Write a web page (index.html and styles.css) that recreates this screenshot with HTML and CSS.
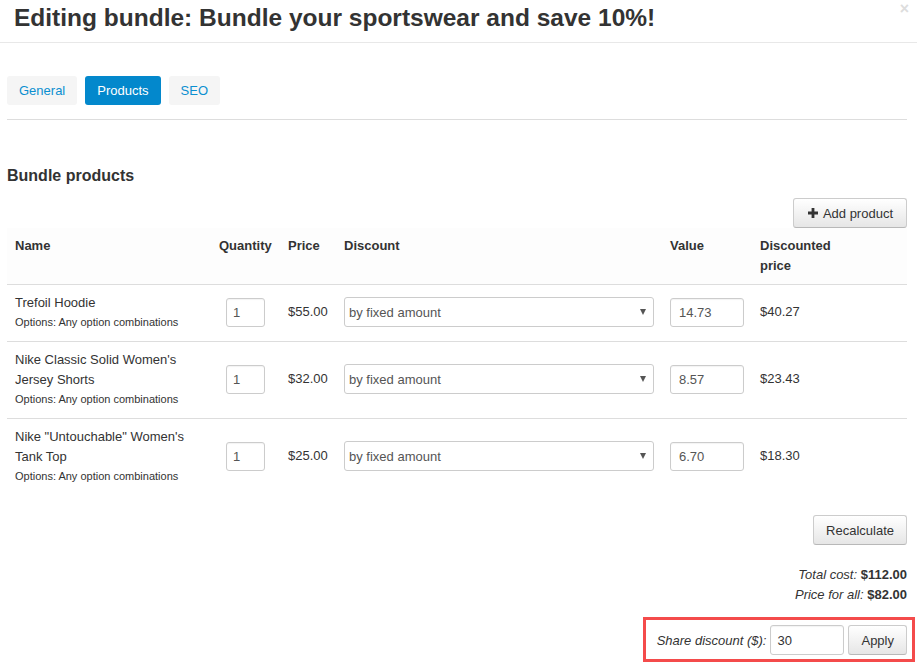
FILE: index.html
```html
<!DOCTYPE html>
<html>
<head>
<meta charset="utf-8">
<link rel="stylesheet" href="styles.css">
</head>
<body>
<div class="modal">
  <div class="modal-header">
    <h1 class="title">Editing bundle: Bundle your sportswear and save 10%!</h1>
    <span class="close">×</span>
  </div>
  <div class="modal-body">
    <div class="tabs">
      <a class="tab">General</a>
      <a class="tab active">Products</a>
      <a class="tab">SEO</a>
    </div>
    <h2 class="section-title">Bundle products</h2>
    <div class="toolbar">
      <button class="btn add"><svg class="plus" width="10" height="10" viewBox="0 0 10 10"><path d="M3.6 0h2.8v3.6H10v2.8H6.4V10H3.6V6.4H0V3.6h3.6z" fill="#333"/></svg>Add product</button>
    </div>
    <table class="products">
      <colgroup>
        <col class="c-name"><col class="c-qty"><col class="c-price"><col class="c-disc"><col class="c-val"><col class="c-dprice">
      </colgroup>
      <thead>
        <tr>
          <th>Name</th><th>Quantity</th><th>Price</th><th>Discount</th><th>Value</th><th>Discounted<br>price</th>
        </tr>
      </thead>
      <tbody>
        <tr>
          <td><div class="pname">Trefoil Hoodie</div><div class="opts">Options: Any option combinations</div></td>
          <td class="center"><input class="inp qty" value="1"></td>
          <td>$55.00</td>
          <td><span class="sel"><select><option>by fixed amount</option></select></span></td>
          <td><input class="inp val" value="14.73"></td>
          <td>$40.27</td>
        </tr>
        <tr>
          <td><div class="pname">Nike Classic Solid Women's Jersey Shorts</div><div class="opts">Options: Any option combinations</div></td>
          <td class="center"><input class="inp qty" value="1"></td>
          <td>$32.00</td>
          <td><span class="sel"><select><option>by fixed amount</option></select></span></td>
          <td><input class="inp val" value="8.57"></td>
          <td>$23.43</td>
        </tr>
        <tr>
          <td><div class="pname">Nike "Untouchable" Women's Tank Top</div><div class="opts">Options: Any option combinations</div></td>
          <td class="center"><input class="inp qty" value="1"></td>
          <td>$25.00</td>
          <td><span class="sel"><select><option>by fixed amount</option></select></span></td>
          <td><input class="inp val" value="6.70"></td>
          <td>$18.30</td>
        </tr>
      </tbody>
    </table>
    <div class="recalc-row"><button class="btn">Recalculate</button></div>
    <div class="totals">
      <div><em>Total cost:</em> <strong>$112.00</strong></div>
      <div><em>Price for all:</em> <strong>$82.00</strong></div>
    </div>
    <div class="share-wrap">
      <div class="share">
        <em class="share-label">Share discount ($):</em>
        <input class="inp share-inp" value="30">
        <button class="btn apply">Apply</button>
      </div>
    </div>
  </div>
</div>
</body>
</html>
```
FILE: styles.css
```css
html, body {
  margin: 0;
  padding: 0;
  background: #fff;
}
body {
  font-family: "Liberation Sans", Arial, sans-serif;
  font-size: 13px;
  color: #333;
}
.modal {
  width: 917px;
  height: 668px;
  overflow: hidden;
}
.modal-header {
  position: relative;
  padding: 3px 14px 9px;
  border-bottom: 1px solid #e8e8e8;
}
.title {
  margin: 0;
  font-size: 24.5px;
  line-height: 30px;
  font-weight: bold;
  color: #333;
}
.close {
  position: absolute;
  right: 8px;
  top: 0;
  font-size: 16px;
  font-weight: bold;
  color: #ddd;
  line-height: 18px;
}
.modal-body {
  padding: 0 10px 0 7px;
}
.tabs {
  display: flex;
  gap: 8px;
  margin-top: 33px;
  padding-bottom: 14px;
  border-bottom: 1px solid #ddd;
}
.tab {
  display: block;
  padding: 6px 12px;
  line-height: 17px;
  background: #f5f5f5;
  color: #0b8fd0;
  border-radius: 3px;
}
.tab.active {
  background: #0388cc;
  color: #fff;
}
.section-title {
  margin: 46px 0 0;
  font-size: 16px;
  line-height: 20px;
  font-weight: bold;
  color: #333;
}
.toolbar {
  display: flex;
  justify-content: flex-end;
  margin-top: 12px;
}
.btn {
  font-family: "Liberation Sans", Arial, sans-serif;
  font-size: 13px;
  color: #333;
  height: 30px;
  padding: 0 12px;
  border: 1px solid #ccc;
  border-bottom-color: #b8b8b8;
  border-radius: 3px;
  background: linear-gradient(#ffffff, #e6e6e6);
  display: inline-flex;
  align-items: center;
  box-shadow: inset 0 1px 0 rgba(255,255,255,0.2);
}
.btn.add {
  padding: 0 13px 0 14px;
  height: 30px;
}
.plus {
  margin-right: 5px;
}
.products {
  width: 900px;
  border-collapse: collapse;
  table-layout: fixed;
}
.c-name { width: 204px; }
.c-qty { width: 69px; }
.c-price { width: 56px; }
.c-disc { width: 326px; }
.c-val { width: 90px; }
.c-dprice { width: 155px; }
.products th {
  text-align: left;
  vertical-align: top;
  font-weight: bold;
  padding: 8px 8px;
  line-height: 20px;
  border-bottom: 1px solid #ddd;
  background: #fdfdfd;
}
.products td {
  padding: 8px 8px 10px;
  vertical-align: middle;
  line-height: 20px;
  border-bottom: 1px solid #ddd;
}
.products tbody tr:last-child td {
  border-bottom: none;
}
.products td.center {
  text-align: center;
}
.opts {
  font-size: 11px;
  line-height: 18px;
}
.inp {
  font-family: "Liberation Sans", Arial, sans-serif;
  font-size: 13px;
  color: #555;
  height: 29px;
  box-sizing: border-box;
  border: 1px solid #ccc;
  border-radius: 3px;
  padding: 0 6px;
  box-shadow: inset 0 1px 1px rgba(0,0,0,0.05);
  outline: none;
  vertical-align: middle;
}
.qty { width: 39px; }
.val { width: 74px; padding-left: 8px; }
.sel {
  position: relative;
  display: inline-block;
  vertical-align: middle;
}
.sel select {
  appearance: none;
  -webkit-appearance: none;
  width: 310px;
  height: 30px;
  font-family: "Liberation Sans", Arial, sans-serif;
  font-size: 13px;
  color: #555;
  background: #fff;
  border: 1px solid #ccc;
  border-radius: 3px;
  padding: 0 4px;
  outline: none;
}
.sel::after {
  content: "";
  position: absolute;
  right: 8px;
  top: 12px;
  border-left: 3px solid transparent;
  border-right: 3px solid transparent;
  border-top: 6px solid #555;
  pointer-events: none;
}
.recalc-row {
  display: flex;
  justify-content: flex-end;
  margin-top: 20px;
}
.totals {
  margin-top: 20px;
  text-align: right;
  line-height: 20px;
}
.share-wrap {
  display: flex;
  justify-content: flex-end;
  margin-top: 12px;
  margin-right: -8px;
}
.share {
  display: flex;
  align-items: center;
  gap: 4px;
  border: 3px solid #f44b4b;
  padding: 5px 5px 4px 11px;
}
.share-inp {
  width: 74px;
  height: 30px;
  padding-left: 6px;
  color: #333;
}
.apply {
  padding: 0 12px;
}
```
